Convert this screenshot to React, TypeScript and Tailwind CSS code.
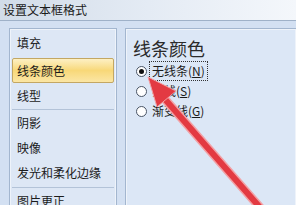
const navItems = [
  { label: "填充", h: "h-[26px] mt-[1px] mb-[2px]" },
  { label: "线条颜色", h: "h-[25px]", active: true },
  { label: "线型", h: "h-[25px]" },
  { sep: true },
  { label: "阴影", h: "h-[24px]" },
  { label: "映像", h: "h-[25px]" },
  { label: "发光和柔化边缘", h: "h-[26px]" },
  { sep: true },
  { label: "图片更正", h: "h-[24px]" },
];

const options = [
  { label: "无线条", key: "N", checked: true },
  { label: "实线", key: "S" },
  { label: "渐变线", key: "G" },
];

function Radio({ checked }: { checked?: boolean }) {
  return (
    <span className="w-[11px] h-[11px] rounded-full border border-[#4a5566] bg-white flex items-center justify-center shrink-0">
      {checked && <span className="w-[5px] h-[5px] rounded-full bg-[#111]" />}
    </span>
  );
}

export default function App() {
  return (
    <div
      className="relative w-[296px] h-[205px] overflow-hidden bg-[#d3e0f2] text-[#1b1b1b]"
      style={{ fontFamily: '"Noto Sans CJK SC", "Noto Sans", sans-serif' }}
    >
      {/* Title bar */}
      <div className="h-[21px] flex items-center pl-[3px] bg-gradient-to-r from-[#d2dce9] via-[#e4ebf4] to-[#f4f7fb] border-b border-[#9fb1c8] text-[12px] leading-none">
        设置文本框格式
      </div>

      <div className="flex pt-[7px] pl-[9px] gap-[8px]">
        {/* Left nav */}
        <div className="w-[108px] h-[190px] border border-[#a3b6cf] bg-[#dde7f5] px-[2px] shadow-[inset_0_0_0_1px_#eef3fa]">
          {navItems.map((item, i) =>
            item.sep ? (
              <div key={i} className="h-[1px] bg-[#b3c3d8] my-[1px]" />
            ) : item.active ? (
              <div
                key={i}
                className={`${item.h} flex items-center pl-[4px] text-[12px] leading-none rounded-[2px] border border-[#c3a763] bg-gradient-to-b from-[#fdf0c3] via-[#f8d878] to-[#fbe6a4]`}
              >
                {item.label}
              </div>
            ) : (
              <div key={i} className={`${item.h} flex items-center pl-[5px] text-[12px] leading-none`}>
                {item.label}
              </div>
            )
          )}
        </div>

        {/* Right panel */}
        <div className="flex-1 h-[190px] border border-[#a3b6cf] border-r-0 bg-[#dce7f6] pl-[7px] pt-[10px] shadow-[inset_0_0_0_1px_#eef3fa]">
          <div className="text-[18px] leading-none text-[#2a2a2a]">线条颜色</div>
          <div className="mt-[8px] flex flex-col gap-[8px] pl-[3px]">
            {options.map((o) => (
              <div key={o.key} className="flex items-center h-[12px]">
                <Radio checked={o.checked} />
                <span
                  className={`ml-[2px] px-[2px] text-[12px] leading-none py-[3px] ${
                    o.checked ? "border border-dotted border-[#333]" : "border border-transparent"
                  }`}
                >
                  {o.label}(<span className="underline">{o.key}</span>)
                </span>
              </div>
            ))}
          </div>
        </div>
      </div>

      {/* Red arrow annotation */}
      <svg className="absolute inset-0 pointer-events-none" width="296" height="205" viewBox="0 0 296 205">
        <line x1="264" y1="212" x2="163" y2="97" stroke="#f3a0a4" strokeWidth="9" strokeLinecap="round" />
        <line x1="264" y1="212" x2="163" y2="97" stroke="#e33a42" strokeWidth="6" strokeLinecap="round" />
        <polygon points="148,77 176,91 157,107" fill="#e33a42" stroke="#f3a0a4" strokeWidth="1" strokeLinejoin="round" />
      </svg>
    </div>
  );
}
